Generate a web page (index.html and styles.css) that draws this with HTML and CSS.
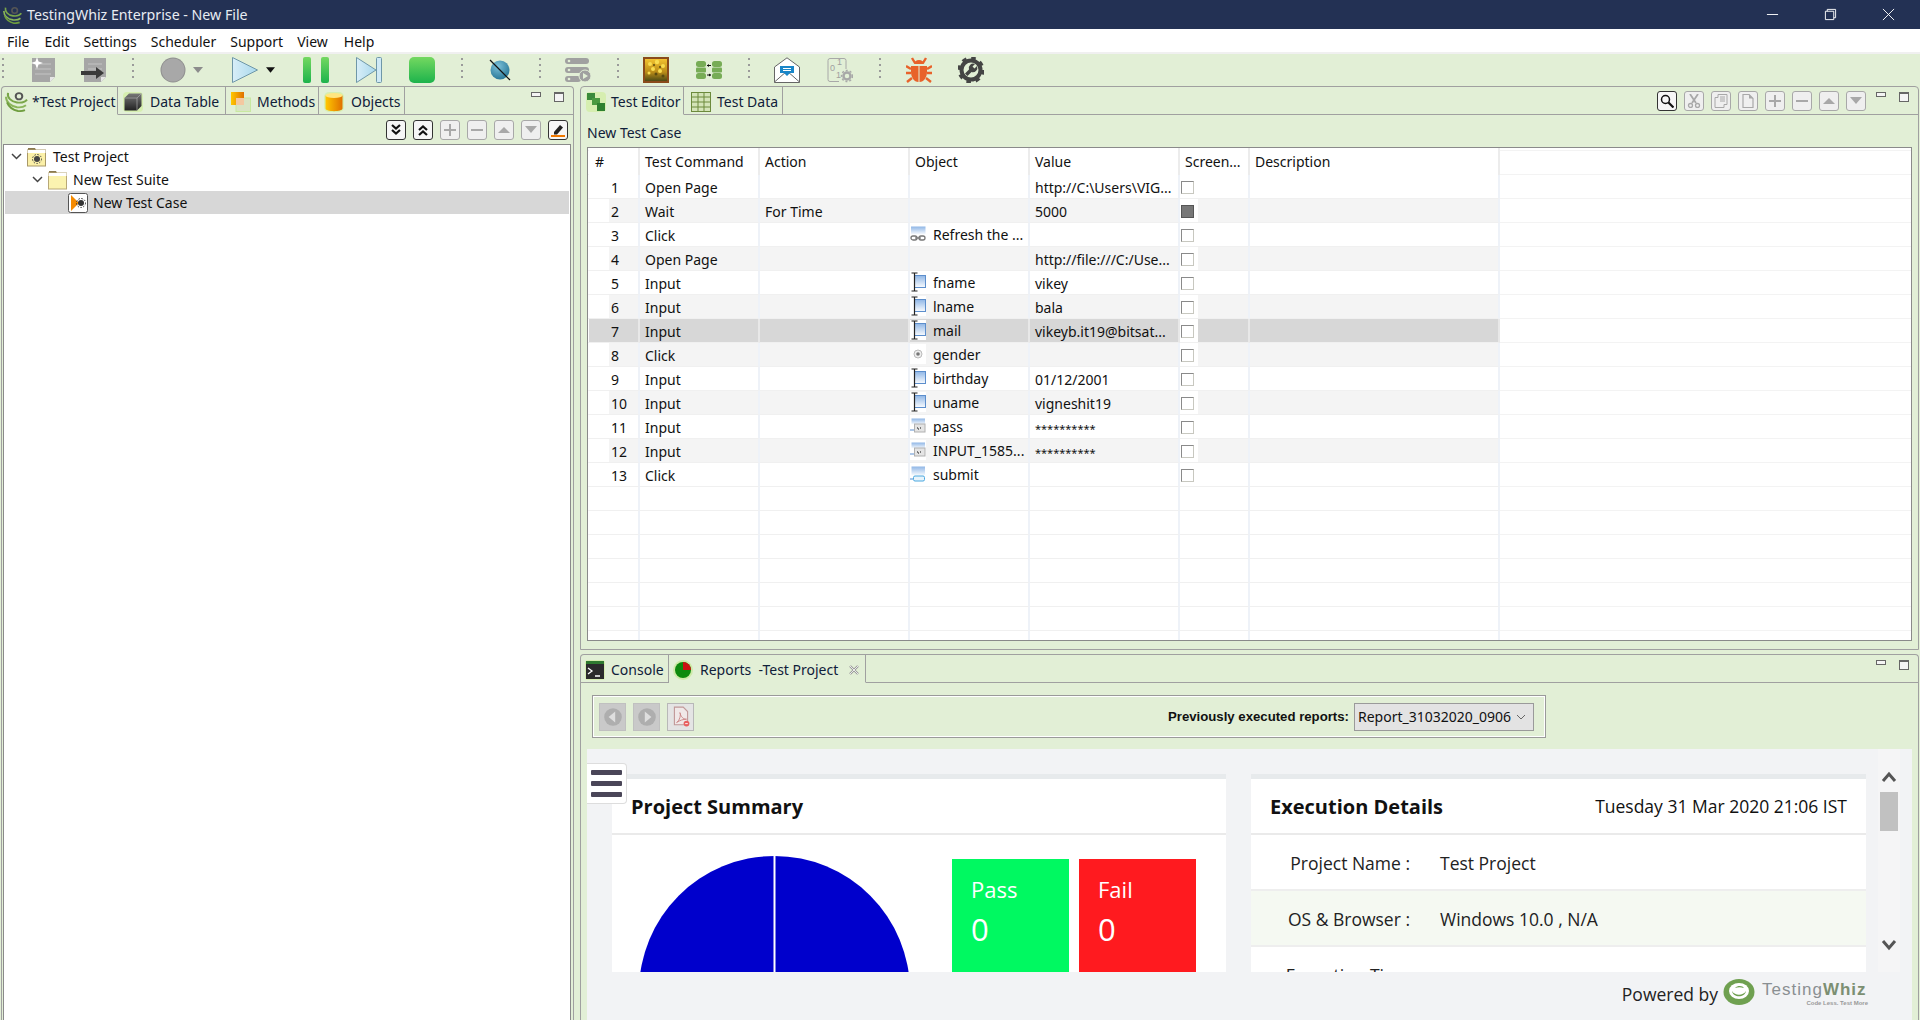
FILE: index.html
```html
<!DOCTYPE html>
<html lang="en">
<head>
<meta charset="utf-8">
<title>TestingWhiz Enterprise - New File</title>
<link rel="stylesheet" href="styles.css">
</head>
<body>
<svg class="defs" aria-hidden="true">
  <defs>
    <linearGradient id="gGreen" x1="0" y1="0" x2="0" y2="1"><stop offset="0" stop-color="#74d860"/><stop offset="1" stop-color="#1db34c"/></linearGradient>
    <linearGradient id="gBlue" x1="0" y1="0" x2="1" y2="0"><stop offset="0" stop-color="#d8eef8"/><stop offset="1" stop-color="#a8d8ec"/></linearGradient>
    <linearGradient id="gOrange" x1="0" y1="0" x2="1" y2="0"><stop offset="0" stop-color="#ffc800"/><stop offset="1" stop-color="#e07000"/></linearGradient>
    <linearGradient id="gCube" x1="0" y1="0" x2="0" y2="1"><stop offset="0" stop-color="#777"/><stop offset="1" stop-color="#222"/></linearGradient>
    <linearGradient id="gField" x1="0" y1="0" x2="0" y2="1"><stop offset="0" stop-color="#8fb6e6"/><stop offset="1" stop-color="#fafcfe"/></linearGradient>
    <radialGradient id="gGlobe" cx=".4" cy=".3" r=".8"><stop offset="0" stop-color="#7cc0d8"/><stop offset="1" stop-color="#1f6f90"/></radialGradient>
    <linearGradient id="gFlower" x1="0" y1="0" x2="0" y2="1"><stop offset="0" stop-color="#f2c230"/><stop offset=".6" stop-color="#b98b18"/><stop offset="1" stop-color="#4d4a14"/></linearGradient>
    <symbol id="swirl" viewBox="0 0 24 22" preserveAspectRatio="none">
      <path d="M3 2c-1 5 3 9 9 10 4 .6 8-.4 10-3" fill="none" stroke="#7aa64a" stroke-width="2"/>
      <path d="M1 6c0 6 5 10 11 11 4 .5 7-.5 9-2" fill="none" stroke="#8ab55a" stroke-width="2"/>
      <path d="M2 12c2 5 6 8 11 9 3 .3 5-.3 7-1" fill="none" stroke="#6f9e3f" stroke-width="2"/>
      <circle cx="14" cy="5.500" r="3.300" fill="none" stroke="#555" stroke-width="2"/>
    </symbol>
    <symbol id="chev" viewBox="0 0 11 7"><path d="M1 1l4.500 4.500L10 1" fill="none" stroke="#444" stroke-width="1.500"/></symbol>
    <symbol id="field" viewBox="0 0 16 20">
      <rect x="4.500" y="3.500" width="11" height="12" fill="url(#gField)" stroke="#5c8ecc"/>
      <path d="M1.500 1h6M4.500 1v18M1.500 19h6" fill="none" stroke="#222" stroke-width="1.200"/>
    </symbol>
    <symbol id="pass" viewBox="0 0 16 20">
      <rect x="1.500" y="2.500" width="13.500" height="6" fill="url(#gField)"/>
      <rect x="4.500" y="8" width="10.500" height="8" fill="#e4e4e4" stroke="#b0b0b0"/>
      <path d="M0 14h4" stroke="#5c8fd0"/>
      <path d="M7 12h1M10 12h1M8 13h1" stroke="#555" stroke-width="1.500"/>
    </symbol>
    <symbol id="down2" viewBox="0 0 14 14"><path d="M3 2l4 3.500L11 2M3 7l4 3.500L11 7" fill="none" stroke="#111" stroke-width="2.200"/></symbol>
    <symbol id="up2" viewBox="0 0 14 14"><path d="M3 7l4-3.500L11 7M3 12l4-3.500L11 12" fill="none" stroke="#111" stroke-width="2.200"/></symbol>
    <symbol id="plus" viewBox="0 0 14 14"><path d="M7 1v12M1 7h12" stroke="#a8a8a8" stroke-width="2"/></symbol>
    <symbol id="minus" viewBox="0 0 14 14"><path d="M1 7h12" stroke="#a8a8a8" stroke-width="2"/></symbol>
    <symbol id="tup" viewBox="0 0 14 14"><path d="M1 10l6-6 6 6z" fill="#a8a8a8"/></symbol>
    <symbol id="tdown" viewBox="0 0 14 14"><path d="M1 3h12L7 10z" fill="#a8a8a8"/></symbol>
  </defs>
</svg>

<header class="titlebar">
  <svg class="title-logo"><use href="#swirl"/></svg>
  <span class="title-text">TestingWhiz Enterprise - New File</span>
  <div class="winctl">
    <svg class="winbtn" viewBox="0 0 14 14"><path d="M1 7h12" stroke="#fff"/></svg>
    <svg class="winbtn" viewBox="0 0 14 14"><path d="M1.500 3.500h9v9h-9zM3.500 3.500v-2h9v9h-2" fill="none" stroke="#fff"/></svg>
    <svg class="winbtn" viewBox="0 0 14 14"><path d="M1 1l12 12M13 1L1 13" stroke="#fff"/></svg>
  </div>
</header>

<nav class="menubar">
  <span class="menu m-file">File</span>
  <span class="menu m-edit">Edit</span>
  <span class="menu m-settings">Settings</span>
  <span class="menu m-sched">Scheduler</span>
  <span class="menu m-support">Support</span>
  <span class="menu m-view">View</span>
  <span class="menu m-help">Help</span>
</nav>

<div class="toolbar">
  <i class="grip g0"></i>
  <svg class="tool" viewBox="0 0 26 26"><path d="M2 1h23v19l-5 5H2z" fill="#a6a6a6"/><path d="M20 25v-5h5z" fill="#e6e6e6"/><path d="M9 7h12M5 12h16M5 17h16" stroke="#c4c4c4"/><path d="M7 0l1.500 4.500L13 6 8.500 7.500 7 12 5.500 7.500 1 6l4.500-1.500z" fill="#fff"/></svg>
  <svg class="tool g25" viewBox="0 0 26 26"><path d="M3 1h22v19l-5 5H3z" fill="#a6a6a6"/><path d="M20 25v-5h5z" fill="#e6e6e6"/><path d="M7 7h14M7 12h14" stroke="#c4c4c4"/><path d="M0 14h15v-4l8 6-8 6v-4H0z" fill="#3a3a3a"/></svg>
  <i class="grip g25"></i>
  <svg class="tool" viewBox="0 0 26 26"><circle cx="13" cy="13" r="12.500" fill="#8f8f8f"/><circle cx="13" cy="13" r="11.500" fill="#a8a8a8"/></svg>
  <svg class="drop g7" viewBox="0 0 10 6"><path d="M0 0h10L5 6z" fill="#8c8c8c"/></svg>
  <svg class="tool g29" viewBox="0 0 26 26"><path d="M.5.500L25.500 13 .5 25.500z" fill="url(#gBlue)" stroke="#6f97a8"/></svg>
  <svg class="drop dark g8" viewBox="0 0 10 6"><path d="M0 0h10L5 6z" fill="#111"/></svg>
  <svg class="tool g28" viewBox="0 0 26 26"><rect x="0" width="8" height="26" rx="2" fill="url(#gGreen)"/><rect x="18" width="8" height="26" rx="2" fill="url(#gGreen)"/></svg>
  <svg class="tool g27" viewBox="0 0 26 26"><path d="M.5.500L20 13 .5 25.500z" fill="url(#gBlue)" stroke="#6f97a8"/><rect x="20.500" y=".5" width="5" height="25" rx="1" fill="#cfe9f5" stroke="#6f97a8"/></svg>
  <svg class="tool g27" viewBox="0 0 26 26"><rect width="26" height="26" rx="5" fill="url(#gGreen)"/></svg>
  <i class="grip"></i>
  <svg class="tool g24" viewBox="0 0 26 26"><circle cx="13" cy="13" r="9.500" fill="url(#gGlobe)"/><path d="M3 3l20 20" stroke="#111" stroke-width="1.200"/></svg>
  <i class="grip"></i>
  <svg class="tool g24" viewBox="0 0 26 26"><rect x="0" y="1" width="24" height="6" rx="3" fill="#a0a0a0"/><rect x="0" y="10" width="24" height="6" rx="3" fill="#a0a0a0"/><rect x="0" y="19" width="16" height="6" rx="3" fill="#a0a0a0"/><circle cx="4" cy="4" r="1.300" fill="#e2efd6"/><circle cx="4" cy="13" r="1.300" fill="#e2efd6"/><circle cx="4" cy="22" r="1.300" fill="#e2efd6"/><circle cx="20" cy="19" r="6" fill="#a0a0a0" stroke="#e2efd6"/><path d="M18 16l5 3-5 3z" fill="#e2efd6"/></svg>
  <i class="grip"></i>
  <svg class="tool g24" viewBox="0 0 26 26"><rect width="26" height="26" fill="#8a4a1a"/><rect x="2" y="2" width="22" height="22" fill="url(#gFlower)"/><g fill="#f8dc50"><circle cx="7" cy="7" r="2"/><circle cx="14" cy="5" r="2.200"/><circle cx="20" cy="9" r="2"/><circle cx="10" cy="12" r="2"/><circle cx="17" cy="14" r="2"/><circle cx="6" cy="16" r="1.500"/></g><g fill="#5a4a10"><circle cx="11" cy="8" r="1"/><circle cx="17" cy="10" r="1"/><circle cx="13" cy="17" r="1.500"/><circle cx="20" cy="19" r="1.500"/></g></svg>
  <svg class="tool g27" viewBox="0 0 26 26"><g fill="#77ac56"><rect x="0" y="4" width="10" height="6" rx="2.500"/><rect x="0" y="10.500" width="10" height="5" rx="1"/><rect x="0" y="16" width="10" height="6" rx="2.500"/><rect x="16" y="4" width="10" height="6" rx="2.500"/><rect x="16" y="10.500" width="10" height="5" rx="1"/><rect x="16" y="16" width="10" height="6" rx="2.500"/></g><path d="M11 8.500h4M11 18h4" stroke="#111"/><path d="M11 8.500l2-1.500v3zM15 18l-2-1.500v3z" fill="#111"/></svg>
  <i class="grip"></i>
  <svg class="tool g24" viewBox="0 0 26 26"><path d="M.5 10L13 .8 25.500 10v15.500H.5z" fill="#fff" stroke="#666"/><path d="M.5 25L13 14l12.500 11" fill="none" stroke="#666"/><path d="M6 9h14v7h-4l-3 3-3-3H6z" fill="#1a86c8"/><path d="M9 11.500h8M9 13.500h8" stroke="#fff"/></svg>
  <svg class="tool g27" viewBox="0 0 26 26"><path d="M3 1.500h14a2 2 0 0 1 2 2V12M12 24.500H3a2 2 0 0 1-2-2v-19a2 2 0 0 1 2-2" fill="none" stroke="#a8a8a8"/><text class="bin-a" x="3" y="14">0</text><text class="bin-a" x="10" y="8">1</text><text class="bin-a" x="9" y="21">1</text><circle cx="20" cy="19" r="3.500" fill="none" stroke="#a8a8a8" stroke-width="2.500"/><circle cx="20" cy="19" r="5.500" fill="none" stroke="#a8a8a8" stroke-width="1.500" stroke-dasharray="2 2"/></svg>
  <i class="grip"></i>
  <svg class="tool g25" viewBox="0 0 26 26"><path d="M6 1l3 5M20 1l-3 5M0 9l5 3M26 9l-5 3M0 16h5M26 16h-5M1 25l5-4M25 25l-5-4" stroke="#e8622a" stroke-width="2.400"/><path d="M8 7a5 4 0 0 1 10 0z" fill="#e8622a"/><path d="M5 9h7.500v16C8 25 5 20 5 15zM21 9h-7.500v16C18 25 21 20 21 15z" fill="#e8622a"/></svg>
  <svg class="tool" viewBox="0 0 26 26"><circle cx="13" cy="13" r="9.500" fill="none" stroke="#444" stroke-width="4"/><circle cx="13" cy="13" r="12" fill="none" stroke="#444" stroke-width="3" stroke-dasharray="4.500 4.900"/><path d="M17 7a4.500 4.500 0 0 0-6 5.500l-4 4 2.500 2.500 4-4a4.500 4.500 0 0 0 5.500-6l-2.500 2.500-2-2z" fill="#444"/></svg>
</div>

<main class="workspace">
  <section class="panel panel-left">
    <div class="tabrow">
      <div class="tab active t-project"><svg class="tab-ico sw"><use href="#swirl"/></svg>*Test Project</div>
      <div class="tab t-data"><svg class="tab-ico" viewBox="0 0 20 20"><rect width="20" height="20" rx="4" fill="#d6eeb0"/><path d="M1.500 6l4.500-4.500h12.500v12.500l-4.500 4.500H1.500z" fill="url(#gCube)"/><path d="M1.500 6h12.500v12.500M14 6l4.500-4.500" fill="none" stroke="#aaa" stroke-width=".7"/></svg>Data Table</div>
      <div class="tab t-methods"><svg class="tab-ico" viewBox="0 0 20 20"><rect x="5" y="6" width="14.500" height="13.500" fill="#d8e4c4" stroke="#c8e8a0"/><rect x="0" y="0" width="13" height="13" fill="url(#gOrange)"/><rect x="5" y="6" width="8" height="7" fill="#f4c8a0"/></svg>Methods</div>
      <div class="tab t-objects"><svg class="tab-ico" viewBox="0 0 20 20"><rect width="20" height="20" rx="5" fill="#d6eeb0"/><path d="M1.500 3.500v13c0 3.500 17 3.500 17 0v-13z" fill="url(#gOrange)"/><ellipse cx="10" cy="3.500" rx="8.500" ry="2.500" fill="#ffe680"/></svg>Objects</div>
      <div class="panel-ctl"><i class="ctl-min"></i><i class="ctl-max"></i></div>
    </div>
    <div class="tree-tools">
      <span class="btn on"><svg><use href="#down2"/></svg></span>
      <span class="btn on"><svg><use href="#up2"/></svg></span>
      <span class="btn"><svg><use href="#plus"/></svg></span>
      <span class="btn"><svg><use href="#minus"/></svg></span>
      <span class="btn"><svg><use href="#tup"/></svg></span>
      <span class="btn"><svg><use href="#tdown"/></svg></span>
      <span class="btn on"><svg viewBox="0 0 14 14"><path d="M3 9l6-7 3 2.500-6 7H3z" fill="#222"/><path d="M0 13h14" stroke="#f07800" stroke-width="2"/></svg></span>
    </div>
    <div class="tree">
      <div class="tree-row lvl1">
        <svg class="tw"><use href="#chev"/></svg>
        <svg class="tree-ico" viewBox="0 0 20 20"><path d="M1 3V1h7l1 2z" fill="#8a7a50"/><rect x=".5" y="3" width="18" height="16" fill="#fbf0a8" stroke="#a89868"/><path d="M.5 3h18v3H.5z" fill="#fff"/><circle cx="10" cy="12" r="3" fill="#444"/><circle cx="10" cy="12" r="4.500" fill="none" stroke="#444" stroke-dasharray="1.500 1.500"/></svg>
        <span>Test Project</span>
      </div>
      <div class="tree-row lvl2">
        <svg class="tw"><use href="#chev"/></svg>
        <svg class="tree-ico" viewBox="0 0 20 20"><path d="M1 3V1h7l1 2z" fill="#8a7a50"/><rect x=".5" y="3" width="18" height="16" fill="#fbf3b0" stroke="#b8a878"/><path d="M.5 3h18v3H.5z" fill="#fff"/></svg>
        <span>New Test Suite</span>
      </div>
      <div class="tree-row lvl3 sel">
        <svg class="tree-ico" viewBox="0 0 20 20"><rect x=".5" y=".5" width="19" height="19" rx="2" fill="#fff" stroke="#555"/><path d="M3 2l8 8-8 8z" fill="#f58a00"/><circle cx="13" cy="10" r="3" fill="#333"/><circle cx="13" cy="10" r="4.500" fill="none" stroke="#333" stroke-dasharray="1.500 1.500"/></svg>
        <span>New Test Case</span>
      </div>
    </div>
  </section>

  <div class="col-right">
    <section class="panel panel-editor">
      <div class="tabrow">
        <div class="tab active t-editor"><svg class="tab-ico" viewBox="0 0 20 20"><rect width="20" height="20" rx="4" fill="#d6eeb0"/><rect x="1" y="1" width="8" height="7" fill="#3b8a3b"/><rect x="6" y="6" width="8" height="7" fill="#4a9a40"/><rect x="11" y="11" width="8" height="8" fill="#2f8030"/></svg>Test Editor</div>
        <div class="tab t-tdata"><svg class="tab-ico" viewBox="0 0 20 20"><rect x=".5" y=".5" width="19" height="19" fill="#d4e4b8" stroke="#6c8a3c"/><path d="M.5 5h19M.5 10h19M.5 15h19M7 .5v19M13 .5v19" stroke="#6c8a3c"/></svg>Test Data</div>
        <div class="tab-tools">
          <span class="btn on"><svg viewBox="0 0 14 14"><circle cx="5.500" cy="5.500" r="4" fill="none" stroke="#111" stroke-width="1.500"/><path d="M8.500 8.500l5 5" stroke="#111" stroke-width="2.200"/></svg></span>
          <span class="btn"><svg viewBox="0 0 14 14"><path d="M3 0l6 9M11 0L5 9" stroke="#a8a8a8" stroke-width="1.800"/><circle cx="3.500" cy="11.500" r="2" fill="none" stroke="#a8a8a8" stroke-width="1.300"/><circle cx="10.500" cy="11.500" r="2" fill="none" stroke="#a8a8a8" stroke-width="1.300"/></svg></span>
          <span class="btn"><svg viewBox="0 0 14 14"><path d="M4 .5h9v10H10v3H1V3.500h3z" fill="none" stroke="#a8a8a8"/><path d="M6 3h5M6 5h5M6 7h5" stroke="#a8a8a8"/></svg></span>
          <span class="btn"><svg viewBox="0 0 14 14"><path d="M2 .5h6l4 4v9H2z" fill="none" stroke="#a8a8a8" stroke-width="1.200"/><path d="M8 .5v4h4z" fill="#a8a8a8"/></svg></span>
          <span class="btn"><svg><use href="#plus"/></svg></span>
          <span class="btn"><svg><use href="#minus"/></svg></span>
          <span class="btn"><svg><use href="#tup"/></svg></span>
          <span class="btn"><svg><use href="#tdown"/></svg></span>
        </div>
        <div class="panel-ctl"><i class="ctl-min"></i><i class="ctl-max"></i></div>
      </div>
      <div class="case-title">New Test Case</div>
      <div class="grid-wrap">
        <table class="grid">
          <colgroup><col class="c-n"><col class="c-cmd"><col class="c-act"><col class="c-obj"><col class="c-val"><col class="c-scr"><col class="c-desc"></colgroup>
          <thead><tr><th class="hash">#</th><th>Test Command</th><th>Action</th><th>Object</th><th>Value</th><th>Screen...</th><th>Description</th></tr></thead>
          <tbody>
            <tr><td class="n">1</td><td>Open Page</td><td></td><td></td><td>http://C:\Users\VIG...</td><td class="s"><i class="cb"></i></td><td></td></tr>
            <tr class="alt"><td class="n">2</td><td>Wait</td><td>For Time</td><td></td><td>5000</td><td class="s"><i class="cb checked"></i></td><td></td></tr>
            <tr><td class="n">3</td><td>Click</td><td></td><td class="o"><svg viewBox="0 0 16 20"><rect x="1" y="2.500" width="14.500" height="8" fill="url(#gField)"/><rect x="1" y="12" width="6" height="4" rx="2" fill="none" stroke="#777" stroke-width="1.300"/><rect x="9" y="12" width="6" height="4" rx="2" fill="none" stroke="#777" stroke-width="1.300"/><path d="M5 14h6" stroke="#777" stroke-width="1.300"/></svg><span>Refresh the ...</span></td><td></td><td class="s"><i class="cb"></i></td><td></td></tr>
            <tr class="alt"><td class="n">4</td><td>Open Page</td><td></td><td></td><td>http://file:///C:/Use...</td><td class="s"><i class="cb"></i></td><td></td></tr>
            <tr><td class="n">5</td><td>Input</td><td></td><td class="o"><svg><use href="#field"/></svg><span>fname</span></td><td>vikey</td><td class="s"><i class="cb"></i></td><td></td></tr>
            <tr class="alt"><td class="n">6</td><td>Input</td><td></td><td class="o"><svg><use href="#field"/></svg><span>lname</span></td><td>bala</td><td class="s"><i class="cb"></i></td><td></td></tr>
            <tr class="sel"><td class="n">7</td><td>Input</td><td></td><td class="o"><svg><use href="#field"/></svg><span>mail</span></td><td>vikeyb.it19@bitsat...</td><td class="s"><i class="cb"></i></td><td></td></tr>
            <tr class="alt"><td class="n">8</td><td>Click</td><td></td><td class="o"><svg viewBox="0 0 16 20"><circle cx="8" cy="10" r="4" fill="#eee" stroke="#bbb"/><circle cx="8" cy="10" r="1.800" fill="#777"/></svg><span>gender</span></td><td></td><td class="s"><i class="cb"></i></td><td></td></tr>
            <tr><td class="n">9</td><td>Input</td><td></td><td class="o"><svg><use href="#field"/></svg><span>birthday</span></td><td>01/12/2001</td><td class="s"><i class="cb"></i></td><td></td></tr>
            <tr class="alt"><td class="n">10</td><td>Input</td><td></td><td class="o"><svg><use href="#field"/></svg><span>uname</span></td><td>vigneshit19</td><td class="s"><i class="cb"></i></td><td></td></tr>
            <tr><td class="n">11</td><td>Input</td><td></td><td class="o"><svg><use href="#pass"/></svg><span>pass</span></td><td class="stars">**********</td><td class="s"><i class="cb"></i></td><td></td></tr>
            <tr class="alt"><td class="n">12</td><td>Input</td><td></td><td class="o"><svg><use href="#pass"/></svg><span>INPUT_1585...</span></td><td class="stars">**********</td><td class="s"><i class="cb"></i></td><td></td></tr>
            <tr><td class="n">13</td><td>Click</td><td></td><td class="o"><svg viewBox="0 0 16 20"><rect x="1.500" y="2.500" width="13.500" height="9" fill="url(#gField)"/><rect x="3.500" y="12" width="11" height="5" rx="1.500" fill="#e8f4fb" stroke="#4aa8e0"/><path d="M0 15h3" stroke="#4a8ad0"/></svg><span>submit</span></td><td></td><td class="s"><i class="cb"></i></td><td></td></tr>
            <tr><td></td><td></td><td></td><td></td><td></td><td></td><td></td></tr>
            <tr><td></td><td></td><td></td><td></td><td></td><td></td><td></td></tr>
            <tr><td></td><td></td><td></td><td></td><td></td><td></td><td></td></tr>
            <tr><td></td><td></td><td></td><td></td><td></td><td></td><td></td></tr>
            <tr><td></td><td></td><td></td><td></td><td></td><td></td><td></td></tr>
            <tr><td></td><td></td><td></td><td></td><td></td><td></td><td></td></tr>
            <tr><td></td><td></td><td></td><td></td><td></td><td></td><td></td></tr>
          </tbody>
        </table>
      </div>
    </section>

    <section class="panel panel-reports">
      <div class="tabrow">
        <div class="tab t-console"><svg class="tab-ico" viewBox="0 0 20 20"><rect width="20" height="20" rx="3" fill="#d6eeb0"/><rect x="1" y="1" width="18" height="3" fill="#2f7a2f"/><rect x="1" y="4" width="18" height="15" fill="#2b2b2b"/><path d="M3 8l4 3-4 3M10 16h5" fill="none" stroke="#fff" stroke-width="1.300"/></svg>Console</div>
        <div class="tab active t-reports"><svg class="tab-ico" viewBox="0 0 20 20"><circle cx="10" cy="10" r="10" fill="#cdeaa8"/><circle cx="10" cy="10" r="8" fill="#0d8a0d"/><path d="M10 10V2a8 8 0 0 1 8 8z" fill="#cc1010"/></svg>Reports&nbsp; -Test Project<svg class="tab-x" viewBox="0 0 10 10"><path d="M1 1l8 8M9 1L1 9" stroke="#999" stroke-width="2.400"/><path d="M1 1l8 8M9 1L1 9" stroke="#fff" stroke-width=".8"/></svg></div>
        <div class="panel-ctl"><i class="ctl-min"></i><i class="ctl-max"></i></div>
      </div>
      <div class="rep-bar">
        <span class="rbtn"><svg viewBox="0 0 20 20"><circle cx="10" cy="10" r="8" fill="#aeaeae"/><path d="M12 5l-6 5 6 5z" fill="#dedede"/></svg></span>
        <span class="rbtn"><svg viewBox="0 0 20 20"><circle cx="10" cy="10" r="8" fill="#aeaeae"/><path d="M8 5l6 5-6 5z" fill="#dedede"/></svg></span>
        <span class="rbtn pdf"><svg viewBox="0 0 20 20"><path d="M4 1h8l4 4v12H4z" fill="#f0e8e8" stroke="#c09898"/><path d="M6 15c3-2 4-7 3-9 1 4 3 6 6 6-3 0-6 1-9 3z" fill="none" stroke="#c88080" stroke-width=".8"/><circle cx="15" cy="16" r="2.600" fill="#e86060"/><path d="M13.800 16h2.400" stroke="#fff" stroke-width=".8"/></svg></span>
        <span class="rep-label">Previously executed reports:</span>
        <div class="rep-select"><span>Report_31032020_0906</span><svg viewBox="0 0 10 6"><path d="M1 1l4 4 4-4" fill="none" stroke="#666"/></svg></div>
      </div>
      <div class="report">
        <div class="rep-main">
          <div class="cards">
            <article class="card summary">
              <h2 class="card-head">Project Summary</h2>
              <div class="sum-body">
                <svg class="pie" viewBox="0 0 272 116"><circle cx="134.500" cy="135.500" r="135.500" fill="#0000cc"/><path d="M134.500 0v116" stroke="#fff" stroke-width="2"/></svg>
                <div class="stat pass"><span class="stat-l">Pass</span><span class="stat-v">0</span></div>
                <div class="stat fail"><span class="stat-l">Fail</span><span class="stat-v">0</span></div>
              </div>
            </article>
            <article class="card details">
              <div class="card-head split"><h2>Execution Details</h2><span class="date">Tuesday 31 Mar 2020 21:06 IST</span></div>
              <div class="det-row"><span class="det-k">Project Name :</span><span>Test Project</span></div>
              <div class="det-row tint"><span class="det-k">OS &amp; Browser :</span><span>Windows 10.0 , N/A</span></div>
              <div class="det-row"><span class="det-k">Execution Time</span></div>
            </article>
          </div>
          <div class="vscroll">
            <svg viewBox="0 0 16 12"><path d="M2 10l6-7 6 7" fill="none" stroke="#555" stroke-width="3"/></svg>
            <div class="thumb"></div>
            <svg viewBox="0 0 16 12"><path d="M2 2l6 7 6-7" fill="none" stroke="#555" stroke-width="3"/></svg>
          </div>
        </div>
        <div class="powered">
          <span>Powered by</span>
          <svg class="pw-logo" viewBox="0 0 32 32"><ellipse cx="16" cy="14" rx="15.500" ry="13" fill="#6fa050"/><ellipse cx="16" cy="13" rx="10" ry="8" fill="#fff"/><path d="M9 13c3 5 11 5 14 0-1 7-13 7-14 0z" fill="#6fa050"/><path d="M12 10c3-3 8-2 9 0-3-1-6-1-9 0z" fill="#6fa050"/></svg>
          <div class="pw-brand"><div class="pw-name">Testing<b>Whiz</b></div><div class="pw-tag">Code Less. Test More</div></div>
        </div>
        <div class="burger"><i></i><i></i><i></i></div>
      </div>
    </section>
  </div>
</main>
</body>
</html>
```
FILE: styles.css
```css
* { box-sizing: border-box; }
html, body { margin: 0; height: 1020px; overflow: hidden; }
body {
  display: flex;
  flex-direction: column;
  font-family: "Noto Sans", "Open Sans", sans-serif;
  font-size: 14px;
  color: #111;
  background: #fff;
}
.defs { position: absolute; width: 0; height: 0; }
h2 { margin: 0; font: inherit; }
i { display: block; }

/* Title bar */
.titlebar { height: 29px; flex: none; display: flex; align-items: center; background: #233154; color: #e8ecf2; }
.title-logo { width: 20px; height: 18px; margin-left: 3px; }
.title-text { margin-left: 4px; font-size: 14.2px; }
.winctl { margin-left: auto; display: flex; height: 100%; align-items: center; gap: 45px; padding-right: 25px; }
.winbtn { width: 13px; height: 13px; }

/* Menu */
.menubar { height: 23px; flex: none; display: flex; align-items: center; background: #fff; padding: 2px 0 0 7px; }
.m-edit { margin-left: 15px; }
.m-settings { margin-left: 14px; }
.m-sched { margin-left: 14px; }
.m-support { margin-left: 14px; }
.m-view { margin-left: 14px; }
.m-help { margin-left: 16px; }

/* Toolbar */
.toolbar {
  height: 34px; flex: none; display: flex; align-items: center;
  padding-left: 2px; background: #e2efd6; border-top: 2px solid #f0f0f0;
}
.toolbar > * { margin-left: 26px; flex: none; }
.toolbar .g0 { margin-left: 0; }
.toolbar .g7 { margin-left: 7px; }
.toolbar .g8 { margin-left: 8px; }
.toolbar .g24 { margin-left: 24px; }
.toolbar .g25 { margin-left: 25px; }
.toolbar .g27 { margin-left: 27px; }
.toolbar .g28 { margin-left: 28px; }
.toolbar .g29 { margin-left: 29px; }
.tool { width: 26px; height: 26px; }
.drop { width: 10px; height: 6px; }
.drop.dark { width: 9px; }
.grip {
  width: 2px; height: 24px;
  background: repeating-linear-gradient(to bottom, #9a9a9a 0 2px, transparent 2px 6px);
}
.bin-a { font: 9px "Liberation Sans", sans-serif; fill: #a0a0a0; }

/* Workspace */
.workspace { flex: 1; min-height: 0; display: flex; gap: 6px; padding-left: 1px; background: #e2efd6; overflow: hidden; }
.panel {
  display: flex; flex-direction: column;
  border: 1px solid #a0a0a0; border-bottom: 0; border-radius: 4px 4px 0 0;
  background: #e2efd6;
}
.panel-left { width: 573px; flex: none; }
.col-right { width: 1339px; flex: none; display: flex; flex-direction: column; gap: 4px; }
.panel-editor { height: 564px; flex: none; border-bottom: 1px solid #a0a0a0; }
.panel-reports { flex: 1; min-height: 0; }

.tabrow { height: 28px; flex: none; display: flex; align-items: stretch; border-bottom: 1px solid #a0a0a0; }
.tab { display: flex; align-items: center; gap: 5px; padding: 2px 0 0 4px; border-right: 1px solid #a0a0a0; white-space: nowrap; color: #10203a; margin-bottom: -1px; border-bottom: 1px solid #a0a0a0; }
.tab.active { border-bottom-color: #e2efd6; }
.tab-ico { width: 20px; height: 20px; flex: none; }
.tab-ico.sw { width: 24px; height: 21px; }
.t-project { width: 116px; padding-left: 3px; gap: 3px; }
.t-data { width: 108px; gap: 7px; padding-left: 5px; }
.t-methods { width: 93px; gap: 6px; padding-left: 5px; }
.t-objects { width: 86px; gap: 7px; padding-left: 5px; }
.t-editor { width: 103px; gap: 5px; padding-left: 5px; }
.t-tdata { width: 99px; padding-left: 7px; gap: 6px; }
.t-console { width: 88px; gap: 6px; }
.t-reports { width: 197px; gap: 7px; }
.tab-x { width: 10px; height: 10px; margin-left: 4px; }

.panel-ctl { display: flex; gap: 13px; padding: 5px 9px 0 0; margin-left: auto; align-items: flex-start; }
.tab-tools + .panel-ctl { margin-left: 10px; }
.ctl-min { width: 10px; height: 5px; border: 1px solid #666; background: #f4f4f4; }
.ctl-max { width: 10px; height: 10px; border: 1px solid #666; border-top-width: 2px; background: #f4f4f4; }

/* Small buttons */
.btn { width: 20px; height: 20px; display: flex; align-items: center; justify-content: center; border: 1px solid #a8a8a8; border-radius: 3px; background: #efefef; }
.btn.on { border-color: #333; background: #f6f6f6; }
.btn svg { width: 14px; height: 14px; }
.tab-tools { margin-left: auto; display: flex; gap: 7px; align-items: center; }
.tree-tools { height: 29px; flex: none; display: flex; align-items: center; justify-content: flex-end; gap: 7px; padding-right: 5px; }

/* Tree */
.tree { flex: 1; margin: 0 2px 0 1px; border: 1px solid #8a8a8a; border-bottom: 0; background: #fff; padding: 0 1px; }
.tree-row { height: 23px; display: flex; align-items: center; }
.tw { width: 11px; height: 7px; flex: none; }
.tree-ico { width: 20px; height: 20px; flex: none; }
.lvl1 { padding-left: 6px; }
.lvl1 .tw { margin-right: 5px; }
.lvl1 .tree-ico { margin-right: 6px; }
.lvl2 { padding-left: 27px; }
.lvl2 .tw { margin-right: 5px; }
.lvl2 .tree-ico { margin-right: 5px; }
.lvl3 { padding-left: 63px; }
.lvl3 .tree-ico { margin-right: 5px; }
.sel { background: #d7d7d7; }

/* Test case grid */
.case-title { height: 32px; flex: none; display: flex; align-items: center; padding: 2px 0 0 6px; color: #10203a; }
.grid-wrap {
  height: 494px; flex: none; margin: 0 6px; border: 1px solid #8a8a8a; overflow: hidden;
  background: linear-gradient(to bottom, #f3f3f3 1px, transparent 1px) 0 2px / 100% 24px #fff;
}
.grid { width: 911px; table-layout: fixed; border-collapse: separate; border-spacing: 0; margin-left: 1px; }
.c-n { width: 51px; } .c-cmd { width: 120px; } .c-act { width: 150px; } .c-obj { width: 120px; }
.c-val { width: 150px; } .c-scr { width: 70px; } .c-desc { width: 250px; }
.grid th { height: 27px; padding: 0 0 0 5px; font-weight: 400; text-align: left; background: #fff; border-right: 2px solid #ececec; white-space: nowrap; overflow: hidden; }
.grid th.hash { padding-left: 6px; }
.grid td { height: 24px; padding: 2px 0 0 5px; background: #fff; border-right: 2px solid #eef2f8; border-bottom: 1px solid #f0f0f0; white-space: nowrap; overflow: hidden; line-height: 1; }
.grid td.n { padding-left: 22px; }
.grid td.s { padding: 0; }
.grid td.stars { vertical-align: top; padding-top: 8px; font-size: 11px; }
.grid .alt td { background: #f4f4f4; }
.grid .alt td.n { background: linear-gradient(to right, #fff 20px, #f4f4f4 20px); }
.grid .sel td { background: #d7d7d7; border-right-color: #e8e8e8; }
.grid td.o { padding: 0; line-height: 22px; }
.grid td.o svg { width: 16px; height: 20px; vertical-align: top; margin-right: 7px; background: #fff; }
.cb { width: 18px; height: 23px; padding: 6px 0 0 1px; background: #fff; }
.cb::before { content: ""; display: block; width: 11px; height: 11px; border: 1px solid #8a8a8a; border-right-color: #c8c8c0; border-bottom-color: #c8c8c0; background: #fff; }
.cb.checked::before { background: #777; border-color: #555; }

/* Reports */
.rep-bar {
  height: 43px; width: 954px; flex: none; margin: 12px 0 11px 11px; padding: 0 11px 0 6px;
  display: flex; align-items: center; gap: 7px;
  border: 1px solid #9a9a9a; box-shadow: inset 0 0 0 1px #fff;
}
.rbtn { width: 27px; height: 28px; display: flex; align-items: center; justify-content: center; background: #c9c9c9; border: 1px solid #c0c0c0; }
.rbtn.pdf { background: #e4e4e4; border-color: #b8b8b8; }
.rbtn svg { width: 22px; height: 22px; }
.rep-label { margin-left: auto; font: 700 13.2px "Liberation Sans", sans-serif; }
.rep-select {
  width: 180px; height: 28px; margin-left: -2px; display: flex; align-items: center; justify-content: space-between;
  padding: 0 7px 0 3px; background: #e3e3e3; border: 1px solid #9a9a9a;
}
.rep-select svg { width: 10px; height: 6px; }
.report { flex: 1; min-height: 0; margin: 0 6px; background: #f2f3f5; position: relative; font-family: "Open Sans", sans-serif; }
.rep-main { height: 223px; display: flex; }
.cards { display: flex; gap: 25px; padding: 25px 0 0 25px; height: 223px; overflow: hidden; }
.card { background: #fff; border-top: 5px solid #e7eaec; height: 198px; overflow: hidden; }
.summary { width: 614px; }
.details { width: 615px; }
.card-head { height: 56px; display: flex; align-items: center; padding-left: 19px; font-size: 20px; font-weight: 700; border-bottom: 2px solid #eaeaea; color: #111; }
.split { justify-content: space-between; padding-right: 19px; }
.split h2 { font-weight: 700; }
.date { font-size: 17.5px; font-weight: 400; }
.sum-body { display: flex; align-items: flex-start; padding: 21px 0 0 28px; height: 140px; }
.pie { width: 272px; height: 116px; flex: none; }
.stat { width: 117px; height: 120px; margin-top: 3px; padding: 15px 19px 0; display: flex; flex-direction: column; color: #fff; }
.stat.pass { margin-left: 40px; background: #00f961; }
.stat.fail { margin-left: 10px; background: #ff1a1f; }
.stat-l { font-size: 22px; line-height: 30px; }
.stat-v { font-size: 31px; line-height: 50px; }
.det-row { height: 56px; display: flex; align-items: center; gap: 30px; padding-top: 2px; font-size: 17.5px; border-bottom: 2px solid #eeeeee; color: #222; }
.det-row.tint { background: #f5f9f2; }
.det-k { width: 159px; text-align: right; flex: none; }
.vscroll { width: 22px; margin-left: 12px; flex: none; height: 223px; background: #f5f5f6; display: flex; flex-direction: column; align-items: center; padding-top: 22px; }
.vscroll svg { width: 16px; height: 12px; flex: none; }
.thumb { width: 18px; height: 39px; margin: 9px 0 108px; background: #c1c1c1; flex: none; }
.powered { display: flex; align-items: center; justify-content: flex-end; padding: 6px 44px 0 0; font-size: 17.5px; color: #222; }
.pw-logo { width: 32px; height: 32px; margin: 0 7px 0 5px; }
.pw-brand { width: 106px; }
.pw-name { font: 17px "Liberation Sans", sans-serif; letter-spacing: 1px; color: #8a8f92; line-height: 18px; }
.pw-name b { color: #7c8f72; }
.pw-tag { font: 700 6px "Liberation Sans", sans-serif; color: #999; text-align: right; line-height: 8px; }
.burger {
  position: absolute; left: 0; top: 14px; width: 40px; height: 41px;
  display: flex; flex-direction: column; justify-content: center; gap: 6px; padding: 0 4px;
  background: #fff; border: 1px solid #ddd; border-left: 0; border-radius: 0 4px 4px 0;
}
.burger i { height: 5px; background: #4a4658; border-radius: 1px; }
```
